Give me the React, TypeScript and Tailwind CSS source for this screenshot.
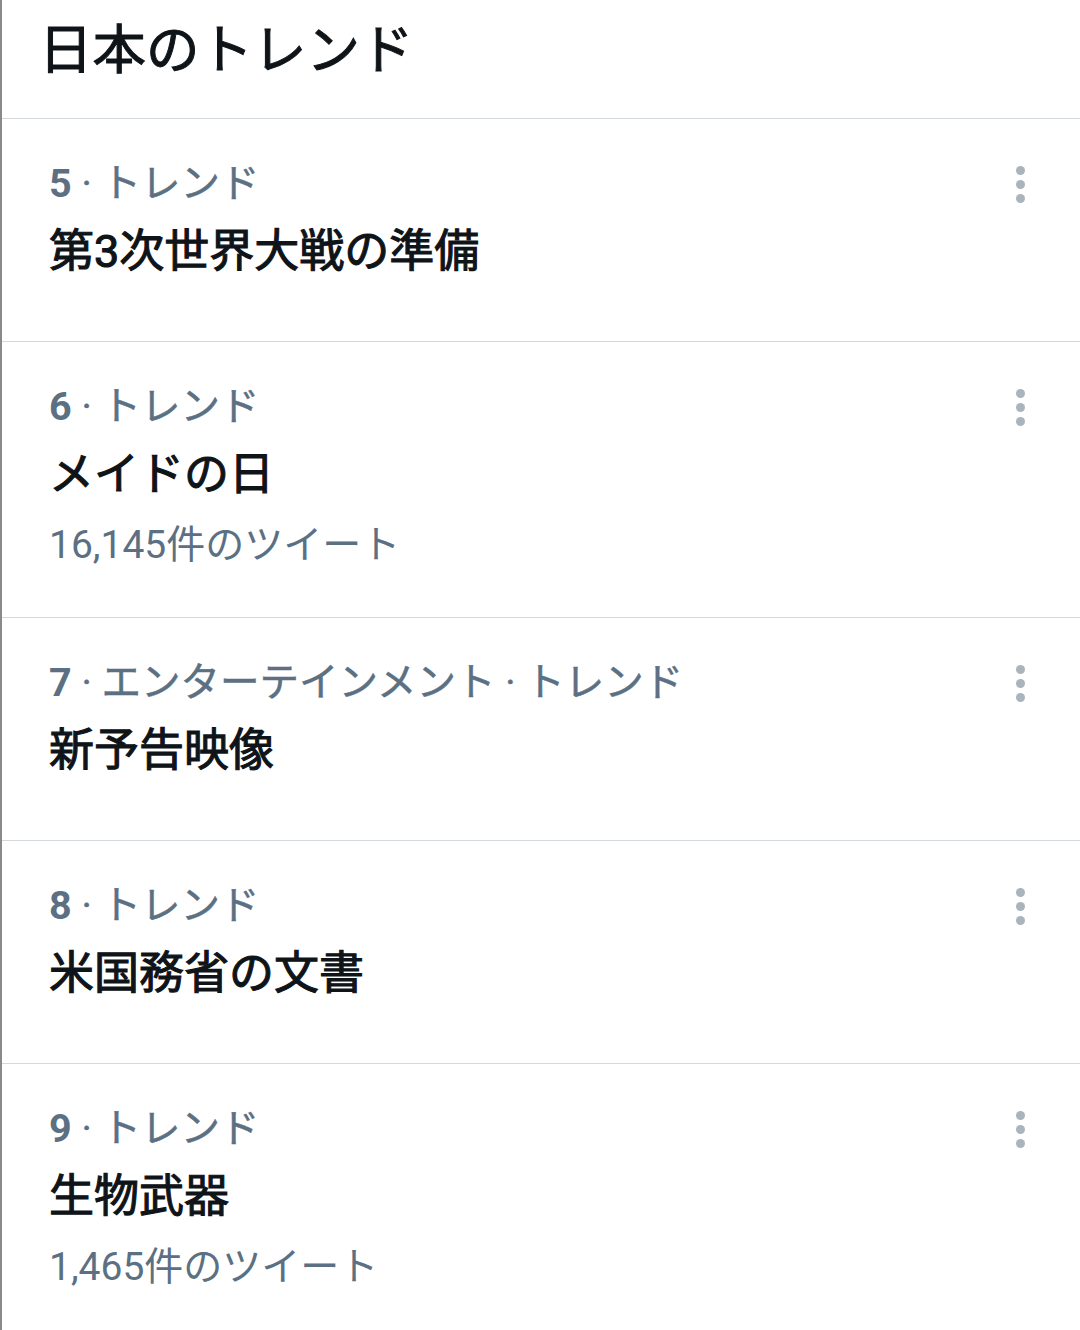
import React from "react";

type Trend = { rank: number; category: string; title: string; count?: string };

const TRENDS: Trend[] = [
  { rank: 5, category: "トレンド", title: "第3次世界大戦の準備" },
  { rank: 6, category: "トレンド", title: "メイドの日", count: "16,145件のツイート" },
  { rank: 7, category: "エンターテインメント · トレンド", title: "新予告映像" },
  { rank: 8, category: "トレンド", title: "米国務省の文書" },
  { rank: 9, category: "トレンド", title: "生物武器", count: "1,465件のツイート" },
];

const font = { fontFamily: 'Roboto, "Noto Sans CJK JP", sans-serif' };

function MoreDots() {
  return (
    <div className="mt-[6px] flex flex-col gap-[5px]">
      <span className="h-[9px] w-[9px] rounded-full bg-[#aab4bd]" />
      <span className="h-[9px] w-[9px] rounded-full bg-[#aab4bd]" />
      <span className="h-[9px] w-[9px] rounded-full bg-[#aab4bd]" />
    </div>
  );
}

function TrendRow({ trend }: { trend: Trend }) {
  return (
    <div className="flex min-h-[223px] items-start justify-between border-b border-[#d3d8dc] pb-[48px] pl-[47px] pr-[55px] pt-[41px]">
      <div className="flex flex-col">
        <div className="h-[48px] text-[39.5px] leading-[48px] text-[#5b7083] [-webkit-text-stroke:0.5px_#5b7083]">
          <span className="font-bold [-webkit-text-stroke:0px]">{trend.rank}</span> · {trend.category}
        </div>
        <div className="mt-[16px] h-[56px] text-[45px] leading-[56px] text-[#0f1419] [-webkit-text-stroke:1.1px_#0f1419]">
          {trend.title}
        </div>
        {trend.count && (
          <div className="mt-[18px] h-[48px] text-[39px] leading-[48px] text-[#5b7083]">{trend.count}</div>
        )}
      </div>
      <MoreDots />
    </div>
  );
}

export default function App() {
  return (
    <div className="min-h-[1330px] w-[1080px] border-l-2 border-[#8a8a8a] bg-white" style={font}>
      <div className="h-[119px] border-b border-[#d3d8dc] pl-[37px] pt-[19px]">
        <h1 className="text-[53.5px] leading-[64px] text-[#0f1419] [-webkit-text-stroke:1px_#0f1419]">日本のトレンド</h1>
      </div>
      {TRENDS.map((t) => (
        <TrendRow key={t.rank} trend={t} />
      ))}
    </div>
  );
}
